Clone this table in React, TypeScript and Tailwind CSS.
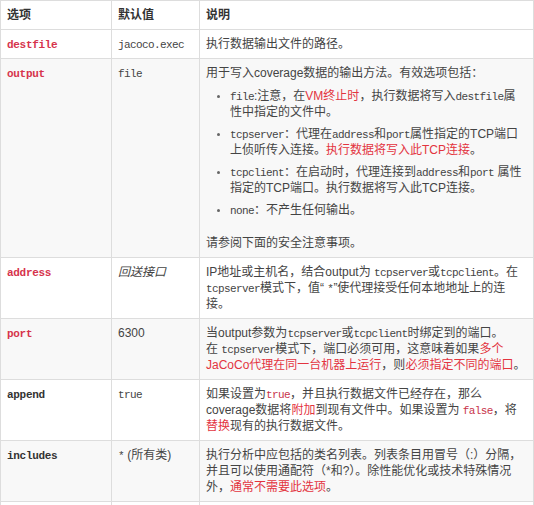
import React from "react";

const sans = "font-['Liberation_Sans','Noto_Sans_CJK_SC',sans-serif]";
const mono = "font-['Liberation_Mono','Noto_Sans_CJK_SC',monospace]";

const C = ({ children }: { children: React.ReactNode }) => (
  <code className={`${mono} text-[11px] leading-none tracking-[-0.6px]`}>{children}</code>
);
const R = ({ children }: { children: React.ReactNode }) => (
  <span className="text-[#e3343f]">{children}</span>
);
const RC = ({ children }: { children: React.ReactNode }) => (
  <code className={`${mono} text-[11px] leading-none tracking-[-0.6px] text-[#c8334a]`}>{children}</code>
);

type Row = {
  name: string;
  red: boolean;
  def: React.ReactNode;
  desc: React.ReactNode;
};

const rows: Row[] = [
  {
    name: "destfile",
    red: true,
    def: <C>jacoco.exec</C>,
    desc: <>执行数据输出文件的路径。</>,
  },
  {
    name: "output",
    red: true,
    def: <C>file</C>,
    desc: (
      <>
        <p>用于写入coverage数据的输出方法。有效选项包括：</p>
        <ul className="list-disc pl-[24px] mt-[7px] mb-[17px] marker:text-[#666] marker:text-[10px]">
          <li className="mb-[6px]">
            <C>file</C>:注意，在<R>VM终止时</R>，执行数据将写入<C>destfile</C>属性中指定的文件中。
          </li>
          <li className="mb-[6px]">
            <C>tcpserver</C>：代理在<C>address</C>和<C>port</C>属性指定的TCP端口上侦听传入连接。<R>执行数据将写入此TCP连接</R>。
          </li>
          <li className="mb-[6px]">
            <C>tcpclient</C>：在启动时，代理连接到<C>address</C>和<C>port</C> 属性指定的TCP端口。执行数据将写入此TCP连接。
          </li>
          <li>
            <C>none</C>：不产生任何输出。
          </li>
        </ul>
        <p>请参阅下面的安全注意事项。</p>
      </>
    ),
  },
  {
    name: "address",
    red: true,
    def: <i>回送接口</i>,
    desc: (
      <>
        IP地址或主机名，结合output为 <C>tcpserver</C>或<C>tcpclient</C>。在
        <C>tcpserver</C>模式下，值“ <C>*</C>”使代理接受任何本地地址上的连接。
      </>
    ),
  },
  {
    name: "port",
    red: true,
    def: <>6300</>,
    desc: (
      <>
        当output参数为<C>tcpserver</C>或<C>tcpclient</C>时绑定到的端口。
        <br />在 <C>tcpserver</C>模式下，端口必须可用，这意味着如果<R>多个JaCoCo代理在同一台机器上运行</R>，则<R>必须指定不同的端口</R>。
      </>
    ),
  },
  {
    name: "append",
    red: false,
    def: <C>true</C>,
    desc: (
      <>
        如果设置为<RC>true</RC>，并且执行数据文件已经存在，那么coverage数据将<R>附加</R>到现有文件中。如果设置为 <RC>false</RC>，将<R>替换</R>现有的执行数据文件。
      </>
    ),
  },
  {
    name: "includes",
    red: false,
    def: (
      <>
        <C>*</C> (所有类)
      </>
    ),
    desc: (
      <>
        执行分析中应包括的类名列表。列表条目用冒号（:）分隔，并且可以使用通配符（*和?）。除性能优化或技术特殊情况外，<R>通常不需要此选项</R>。
      </>
    ),
  },
  {
    name: "excludes",
    red: false,
    def: <>空 (不排除类)</>,
    desc: <>应从执行分析中排除的类名列表。列表条目用冒号（:）分隔，并且可以使用通配符（*和?）。</>,
  },
];

export default function App() {
  return (
    <div className={`w-[534px] h-[505px] overflow-hidden bg-white ${sans} text-[12px] leading-[16px] text-[#444]`}>
      <table className="w-[534px] table-fixed border-collapse">
        <colgroup>
          <col className="w-[111px]" />
          <col className="w-[88px]" />
          <col />
        </colgroup>
        <thead>
          <tr className="bg-white">
            <th className="border border-[#ddd] px-[6px] py-[6px] text-left font-bold text-[#333]">选项</th>
            <th className="border border-[#ddd] px-[6px] py-[6px] text-left font-bold text-[#333]">默认值</th>
            <th className="border border-[#ddd] px-[6px] py-[6px] text-left font-bold text-[#333]">说明</th>
          </tr>
        </thead>
        <tbody>
          {rows.map((r, i) => (
            <tr key={r.name} className={i % 2 === 1 ? "bg-[#f8f8f8]" : "bg-white"}>
              <td className="border border-[#ddd] px-[6px] py-[6px] align-top">
                <code className={`${mono} text-[11px] leading-none tracking-[-0.3px] font-bold ${r.red ? "text-[#d6334c]" : "text-[#333]"}`}>
                  {r.name}
                </code>
              </td>
              <td className="border border-[#ddd] px-[6px] py-[6px] align-top">{r.def}</td>
              <td className="border border-[#ddd] px-[6px] py-[6px] align-top">{r.desc}</td>
            </tr>
          ))}
        </tbody>
      </table>
    </div>
  );
}
